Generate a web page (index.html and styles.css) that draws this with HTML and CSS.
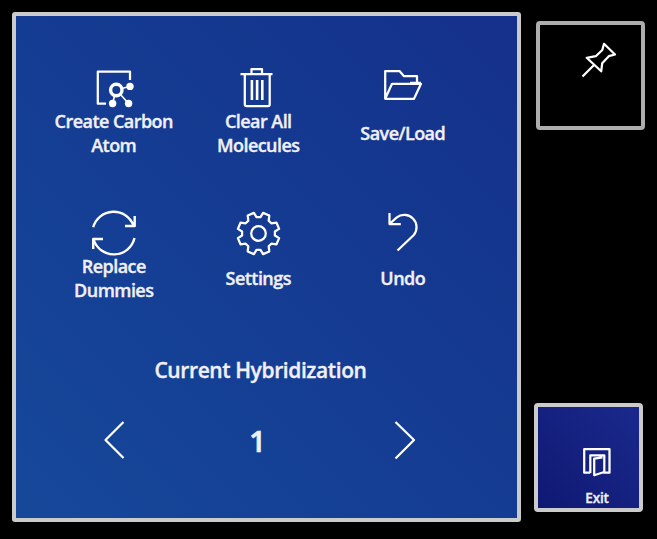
FILE: index.html
```html
<!DOCTYPE html>
<html lang="en">
<head>
<meta charset="utf-8">
<title>Molecule menu</title>
<link rel="stylesheet" href="styles.css">
</head>
<body>
<main class="panel">
  <div class="actions">
    <div class="action">
      <svg class="icon" viewBox="90 61 48 48"><path d="M106 103.7H97.8V71.5H130V80"/><circle cx="116.3" cy="90" r="5.7" stroke-width="3.4"/><path stroke-width="1.6" d="M122 88.4L130 86.3M114.5 96L112.6 103.5M120.5 94.5L128.5 103.5"/><g class="solid"><circle cx="130" cy="86.4" r="3.7"/><circle cx="112.6" cy="103.5" r="3.7"/><circle cx="128.6" cy="103.5" r="3.7"/></g></svg>
      <span class="label">Create Carbon Atom</span>
    </div>
    <div class="action">
      <svg class="icon" viewBox="234.5 61 48 48"><path d="M241 74H273M252 74V69H262.5V74M245.3 75V104.5Q245.3 106 247 106H268.5Q270.2 106 270.2 104.5V75"/><path stroke-width="2.6" d="M252.4 80V100M257.6 80V100M262.8 80V100"/></svg>
      <span class="label">Clear All Molecules</span>
    </div>
    <div class="action">
      <svg class="icon" viewBox="379 61 48 48"><path d="M385.2 98.8V71H399.5L404 76.2H417V83M385.2 98.8L392 83.8H421L414 98.8ZM410 82.8H421"/></svg>
      <span class="label">Save/Load</span>
    </div>
    <div class="action">
      <svg class="icon" viewBox="90 206 48 48"><path stroke-width="2.4" d="M93.2 227.3A21.2 21.2 0 0 1 133.5 225.5M134.7 216V226H125M134.5 238A21.2 21.2 0 0 1 93.6 239.5M93.2 249V239H103"/></svg>
      <span class="label">Replace Dummies</span>
    </div>
    <div class="action">
      <svg class="icon" viewBox="-24.5 -27.5 48 48"><path d="M4.6-20.6L10.8-18L10.2-12.8L12.8-10.2L18-10.8L20.6-4.6L16.4-2V2L20.6 4.6L18 10.8L12.8 10.2L10.2 12.8L10.8 18L4.6 20.6L2 16.4H-2L-4.6 20.6L-10.8 18L-10.2 12.8L-12.8 10.2L-18 10.8L-20.6 4.6L-16.4 2V-2L-20.6-4.6L-18-10.8L-12.8-10.2L-10.2-12.8L-10.8-18L-4.6-20.6L-2-16.4H2Z"/><circle r="7.3"/></svg>
      <span class="label">Settings</span>
    </div>
    <div class="action">
      <svg class="icon" viewBox="379 206 48 48"><path d="M389.5 213V224H400.8M390 223.5L396.5 217.7A12.3 12.3 0 0 1 413.8 235L397.5 250.5"/></svg>
      <span class="label">Undo</span>
    </div>
  </div>
  <h1 class="title"><span>Current Hybridization</span></h1>
  <div class="stepper">
    <svg class="chevron" viewBox="0 0 24 40"><path d="M21.5 2L3.5 20L21.5 38"/></svg>
    <span class="value">1</span>
    <svg class="chevron" viewBox="0 0 24 40"><path d="M2.5 2L21 20L2.5 38.5"/></svg>
  </div>
</main>
<aside class="side">
  <div class="tile pin">
    <svg class="glyph" viewBox="578 40 40 40"><path d="M604 43.8L615 54.5L608.8 56.2L602.2 63.3L601.2 71.3L586.7 57.8L595.8 56.2L602.3 50ZM593.5 65.5L582.5 76.5"/></svg>
  </div>
  <div class="tile exit">
    <svg class="glyph" viewBox="577 442 40 40"><path d="M590.3 472.7H584.2V449.2H609.5V472.7H603.5M590.3 473V455.3H604.3V472.5M594.2 458.6L602.5 457.3M594.2 457.8V475.2L603.5 472.2"/></svg>
    <span class="exit-label">Exit</span>
  </div>
</aside>
</body>
</html>
```
FILE: styles.css
```css
* { box-sizing: border-box; }
body {
  margin: 0;
  height: 539px;
  overflow: hidden;
  background: #000;
  color: #f1f0f6;
  font-family: "Open Sans", "Noto Sans", sans-serif;
  font-weight: 600;
  -webkit-text-stroke: 0.35px #f1f0f6;
  display: flex;
  align-items: flex-start;
}
svg {
  fill: none;
  stroke: #fff;
  stroke-width: 2.25;
  stroke-linejoin: round;
  overflow: visible;
  flex: none;
}
.solid { fill: #fff; stroke: none; }
.panel {
  width: 509px;
  height: 510px;
  margin: 12px 0 0 12px;
  padding: 45px 0 0 25.5px;
  border: 4px solid #cbcbcb;
  border-radius: 3px;
  background: linear-gradient(45deg, #16489a, #143c92 50%, #15308a);
}
.actions {
  display: grid;
  grid-template-columns: repeat(3, 144.5px);
  grid-auto-rows: 96px;
  row-gap: 49px;
}
.action {
  display: flex;
  flex-direction: column;
  align-items: center;
}
.icon { width: 48px; height: 48px; }
.label {
  display: flex;
  align-items: center;
  justify-content: center;
  width: 125px;
  height: 48px;
  flex: none;
  text-align: center;
  font-size: 18px;
  line-height: 24px;
  letter-spacing: -0.55px;
}
.title {
  width: 438px;
  margin: 53px 0 0;
  text-align: center;
  font-size: 21px;
  line-height: 30px;
  font-weight: 600;
  letter-spacing: -0.4px;
}
.stepper {
  width: 315px;
  height: 40px;
  margin: 35px 0 0 60.5px;
  display: flex;
  align-items: center;
  justify-content: space-between;
}
.chevron { width: 24px; height: 40px; }
.value {
  font-size: 29px;
  line-height: 40px;
  padding: 2px 4px 0 0;
  -webkit-text-stroke-width: 0.7px;
}
.side {
  margin: 21px 0 0 13px;
  height: 491px;
  width: 112px;
  display: flex;
  flex-direction: column;
  justify-content: space-between;
}
.tile {
  width: 109px;
  height: 109px;
  border: 4px solid #cbcbcb;
  border-radius: 4px;
  display: flex;
  flex-direction: column;
  align-items: center;
}
.pin { margin-left: 2px; border-color: #adadad; padding: 15px 0 0 15px; }
.exit {
  padding: 35px 0 0 16px;
  background: linear-gradient(45deg, #0f1973, #15217f 50%, #1a298d);
}
.glyph { width: 40px; height: 40px; }
.exit-label {
  font-size: 13.5px;
  line-height: 20px;
  margin: 6px 0 0 1px;
  letter-spacing: -0.2px;
}
```
